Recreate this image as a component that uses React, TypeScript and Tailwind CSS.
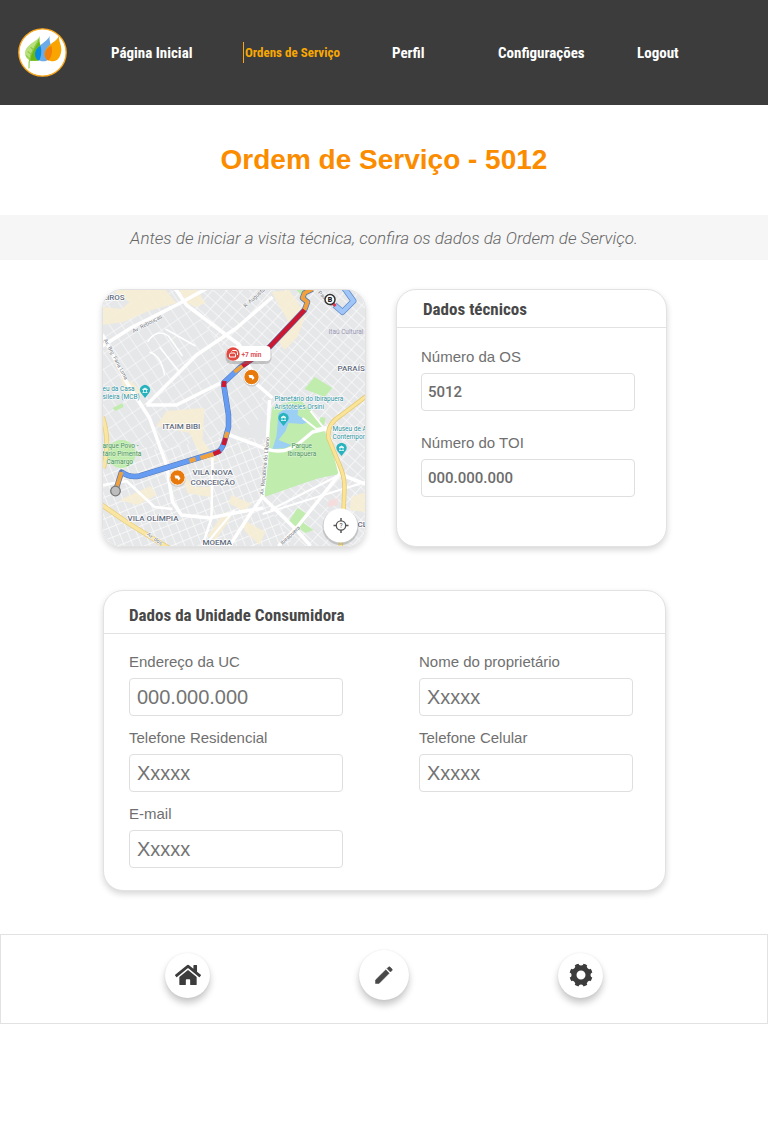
import React from "react";
import { FaHome } from "react-icons/fa";

const navItems = [
  { label: "Página Inicial", active: false },
  { label: "Ordens de Serviço", active: true },
  { label: "Perfil", active: false },
  { label: "Configurações", active: false },
  { label: "Logout", active: false },
];

function Logo() {
  return (
    <svg viewBox="24 26 147 147" className="size-[49px] shrink-0" role="img" aria-label="Logo">
      <circle cx="97.500" cy="99.500" r="71" fill="#fff" stroke="#f9a61c" strokeWidth="4" />
      <path d="M89 50C84 66 47 74 45 101C45 113 53 122 64 125L82 124C94 108 96 90 91 78C88 70 87 60 89 50Z" fill="#b9e07f" />
      <path d="M89 50C84 72 62 90 60 124L84 124C95 112 98 92 92 80C88 70 87 60 89 50Z" fill="#6cb812" />
      <path d="M57 147C55 120 64 98 86 64M58 118L48 108M64 105L53 96M71 91L62 84" fill="none" stroke="#8dca45" strokeWidth="3.500" />
      <path d="M119 49C113 68 77 77 75 104C75 118 87 126 100 126C116 126 126 110 126 94C126 78 116 68 119 49Z" fill="#6cabe8" />
      <path d="M91 79C80 85 75 94 75 104C75 116 81 122 87 124C94 112 96 92 91 79Z" fill="#078bdc" />
      <path d="M147 48C143 68 106 76 104 104C104 118 116 126 129 126C145 126 153 108 154 92C154 75 145 66 147 48Z" fill="#faa400" />
      <path d="M124 80C111 86 104 93 104 105C104 115 109 121 115 124C125 113 129 94 124 80Z" fill="#f17f0b" />
    </svg>
  );
}

function GearIcon() {
  return (
    <svg viewBox="0 0 24 24" className="size-6" aria-hidden="true">
      <circle cx="12" cy="12" r="8" fill="none" stroke="#3c3c3c" strokeWidth="7" />
      {[0, 45, 90, 135, 180, 225, 270, 315].map((a) => (
        <circle key={a} cx="12" cy="0" r="2.500" fill="#fff" transform={`rotate(${a} 12 12)`} />
      ))}
    </svg>
  );
}

function PencilIcon() {
  return (
    <svg viewBox="0 0 18 18" className="size-[18px]" aria-hidden="true">
      <path d="M0.500 17.500V14L10.800 3.800L14.200 7.200L4 17.500ZM12 2.600L13.600 1Q14.300 0.400 15 1L17 3Q17.600 3.700 17 4.400L15.400 6Z" fill="#484848" stroke="#484848" strokeWidth="0.500" />
    </svg>
  );
}

function Pin({ x, y }: { x: number; y: number }) {
  return (
    <g transform={`translate(${x} ${y})`}>
      <path d="M0 7L-4 2A5 5 0 1 1 4 2Z" fill="#26b3bd" />
      <path d="M-2.500 -1.500L0 -3L2.500 -1.500ZM-2.500 1.500H2.500M-1.500 -1V1.500M1.500 -1V1.500" fill="#fff" stroke="#fff" strokeWidth="0.700" />
    </g>
  );
}

function Roadwork({ x, y }: { x: number; y: number }) {
  return (
    <g transform={`translate(${x} ${y})`}>
      <circle cy="1" r="8.500" fill="#b5b5b5" opacity="0.600" />
      <circle r="7.700" fill="#e8790d" stroke="#fff" />
      <path d="M-3 -2L1 -2L3 1L1 3L0 1L-2 1Z" fill="#fff" />
    </g>
  );
}

function RouteMap() {
  return (
    <svg
      viewBox="103 290 263 256"
      preserveAspectRatio="xMidYMid slice"
      className="block h-full w-full font-['Roboto',sans-serif]"
      role="img"
      aria-label="Mapa do trajeto"
    >
      <defs>
        <pattern id="gridEast" width="11" height="8" patternUnits="userSpaceOnUse" patternTransform="rotate(42)">
          <path d="M0 0H11M0 0V8" stroke="#f9f9fa" strokeWidth="1.600" />
        </pattern>
        <pattern id="gridWest" width="13" height="10" patternUnits="userSpaceOnUse" patternTransform="rotate(56)">
          <path d="M0 0H13M0 0V10" stroke="#f8f8f9" strokeWidth="1.500" />
        </pattern>
        <pattern id="gridSouth" width="10" height="8" patternUnits="userSpaceOnUse" patternTransform="rotate(68)">
          <path d="M0 0H10M0 0V8" stroke="#fafafa" strokeWidth="1.700" />
        </pattern>
      </defs>
      <rect x="103" y="290" width="263" height="256" fill="#e6e7e9" />
      <path d="M177 290H366V546H295L263 497L268 415L258 385L187 305Z" fill="url(#gridEast)" />
      <path d="M103 290H177L187 305L258 385L268 415L230 435L160 450L103 440Z" fill="url(#gridWest)" />
      <path d="M103 440L160 450L230 435L268 440L263 497L295 546H103Z" fill="url(#gridSouth)" />

      <g fill="#f7eed2" opacity="0.850">
        <path d="M112 290L166 290L177 303L149 311L124 322L103 325V307L122 309L130 302Z" />
        <path d="M180 290H198L206 303L196 307L187 303Z" />
        <path d="M272 292L290 290L306 315L298 337L285 350L276 337L289 322Z" />
        <path d="M121 378L132 382L143 392L138 401L126 395Z" />
        <path d="M167 411L205 408L203 440L218 461L203 459L190 433L157 426Z" />
        <path d="M120 500L151 486L157 495L138 505ZM181 472L195 487L214 487L210 497L188 493Z" />
        <path d="M232 495L252 504L244 511L229 503ZM244 520L266 532L260 545L245 531ZM352 497L366 492V512L350 510Z" />
        <path d="M208 536L225 512L232 517L216 540Z" />
      </g>
      <path d="M329 501L338 498L338 505L328 507Z" fill="#f6dddd" />

      <g fill="#c0ecae">
        <path d="M273 407L300 399L314 413L330 440L340 474L320 478L299 485L265 497L268 440Z" />
        <path d="M305 389L315 377L333 388L325 397Z" />
        <path d="M289 522L298 508L309 515L304 523L314 530L306 533Z" />
        <path d="M297 290H309L306 300Z" />
        <circle cx="122" cy="454" r="14" />
        <path d="M113 408L123 403L124 407L116 411Z" />
        <path d="M321 417L326 418L325 424L319 428Z" />
      </g>
      <path d="M279 413L287 408H299L298 415L309 422L303 424L289 423L286 431L279 440L292 445L286 448L273 449L277 436Z" fill="#9bcff4" />

      <g fill="none" stroke="#fff" strokeWidth="3.500" strokeLinejoin="round">
        <path d="M103 346L133 327L177 305L210 287" />
        <path d="M174 286L187 305L240 345L258 385L273 398" />
        <path d="M103 335L127 382L150 418L167 465L173 502L182 515L210 518L240 512L264 508" />
        <path d="M147 405H177L223 382" />
        <path d="M147 405L197 355L237 328L273 297" />
        <path d="M230 435L257 445Q282 458 300 443L313 432L330 428" />
        <path d="M311 411L330 435L340 474M303 418L317 429L327 427" strokeWidth="2" />
        <path d="M270 400L267 458L263 497L297 530L311 546" />
        <path d="M263 497L250 515L230 546M340 474L297 528L279 546M340 474L366 484" />
        <path d="M103 485L127 481L155 507L173 509M213 458L212 518L203 546" strokeWidth="2.500" />
        <path d="M235 510L205 546M263 514L366 482M271 510L340 475" strokeWidth="2" />
        <path d="M148 342Q157 328 169 336L183 356M150 352Q162 356 165 375M160 347L180 372M166 329L196 346" strokeWidth="1.500" />
      </g>
      <g fill="none" strokeLinejoin="round">
        <path d="M367 396L342 415Q327 424 329 438L340 465Q345 476 345 487L344 512L341 548" stroke="#e4c96f" strokeWidth="4.500" />
        <path d="M367 396L342 415Q327 424 329 438L340 465Q345 476 345 487L344 512L341 548" stroke="#fae49a" strokeWidth="3" />
        <path d="M103 417Q111 441 104 468M101 504L127 522L143 532L169 548" stroke="#e6cc78" strokeWidth="5" />
        <path d="M103 417Q111 441 104 468M101 504L127 522L143 532L169 548" stroke="#fae6a4" strokeWidth="3.500" />
      </g>

      <g fill="#737780" stroke="#fff" strokeWidth="1" paintOrder="stroke" fontSize="5.500">
        <text transform="translate(134 333) rotate(-28)">Av. Rebouças</text>
        <text transform="translate(104 340) rotate(62)">Av. Brg. Faria Lima</text>
        <text transform="translate(246 308) rotate(-42)">R. Augusta</text>
        <text transform="translate(264 495) rotate(-84)">Av. República do Líbano</text>
        <text transform="translate(147 535) rotate(35)">Av. dos</text>
        <text transform="translate(283 545) rotate(-43)">Ibirapuera</text>
        <text transform="translate(318 293) rotate(45)">Paulista</text>
      </g>

      <g fill="none" strokeLinejoin="round">
        <path d="M116 491L122 472Q130 478 140 476L218 452Q223 450 226 438L229 427V415L224 383L241 367L270 347L305 310L308 302L303 298L305 293L313 289" stroke="#5578b5" strokeWidth="5.500" />
        <path d="M122 472Q130 478 140 476L218 452Q223 450 226 438L229 427V415L224 383L241 367" stroke="#669cf1" strokeWidth="4.500" />
        <path d="M116 491L122 472M190 461L196 459M201 458L214 454M226 438L228 432M235 372L243 366M305 310L308 302L303 298L305 293L313 289" stroke="#f1a13c" strokeWidth="4" />
        <path d="M214 454L221 451M224 445L226 438M224 387L225 381M243 366L270 347L305 310" stroke="#cc1830" strokeWidth="4.500" />
        <path d="M335 305L343 312L354 301L344 287" stroke="#638bc8" strokeWidth="6" />
        <path d="M335 305L343 312L354 301L344 287" stroke="#a0c5f7" strokeWidth="4.500" />
        <path d="M333 303L336 306" stroke="#dd3548" strokeWidth="3" />
      </g>
      <circle cx="116" cy="491" r="4.800" fill="#bdbdbd" stroke="#777" strokeWidth="1.300" />
      <circle cx="330.500" cy="299.500" r="5" fill="#fff" stroke="#333" strokeWidth="1.500" />
      <text x="330.500" y="302" textAnchor="middle" fontSize="7" fontWeight="900" fill="#222">B</text>

      <g fill="#626b7d" stroke="#fff" strokeWidth="1.500" paintOrder="stroke" fontSize="8" fontWeight="500">
        <text x="103" y="300">EIROS</text>
        <text x="163" y="429">ITAIM BIBI</text>
        <text x="193" y="475">VILA NOVA</text>
        <text x="191" y="485">CONCEIÇÃO</text>
        <text x="128" y="521">VILA OLÍMPIA</text>
        <text x="203" y="545">MOEMA</text>
        <text x="338" y="371">PARAÍS</text>
        <text x="358" y="527">CL</text>
      </g>
      <g fill="#278f9c" stroke="#fff" strokeWidth="1" paintOrder="stroke" fontSize="6.500">
        <text x="103" y="391">eu da Casa</text>
        <text x="103" y="399">sileira (MCB)</text>
        <text x="275" y="401">Planetário do Ibirapuera</text>
        <text x="275" y="409">Aristóteles Orsini</text>
        <text x="333" y="431">Museu de A</text>
        <text x="333" y="439">Contempor</text>
      </g>
      <g fill="#48905a" stroke="#e2f5da" strokeWidth="0.800" paintOrder="stroke" fontSize="6.500">
        <text x="292" y="448">Parque</text>
        <text x="288" y="456">Ibirapuera</text>
        <text x="103" y="448">arque Povo -</text>
        <text x="103" y="456">tário Pimenta</text>
        <text x="107" y="464">Camargo</text>
      </g>
      <text x="329" y="334" fontSize="6.500" fill="#9b97b6">Itaú Cultural</text>
      <Pin x={145.5} y={391} />
      <Pin x={284} y={419} />
      <Pin x={342} y={449} />
      <Roadwork x={252} y={377} />
      <Roadwork x={178} y={477.5} />

      <rect x="226" y="347" width="46" height="17" rx="6" fill="#777" opacity="0.350" />
      <path d="M234 346H267Q271 346 271 350V357Q271 361 267 361H234A7.500 7.500 0 0 1 234 346Z" fill="#fff" />
      <circle cx="233.500" cy="354" r="6.700" fill="#e24940" />
      <path d="M230 357V354.500L231 353H235L236 354.500V357ZM232 351.500L233 350.500H237L238 352.500V355" fill="none" stroke="#fff" strokeWidth="1" />
      <text x="242" y="357" fontSize="6.500" fontWeight="700" fill="#d95058">+7 min</text>

      <circle cx="341" cy="527" r="18" fill="#555" opacity="0.250" />
      <circle cx="341" cy="525.500" r="17" fill="#fff" />
      <circle cx="341.500" cy="525.500" r="4.700" fill="none" stroke="#555" strokeWidth="1.300" />
      <path d="M341.500 518V521M341.500 530V533M334 525.500H337M346 525.500H349" stroke="#555" strokeWidth="1.500" />
      <text x="341.500" y="528" textAnchor="middle" fontSize="6.500" fill="#444">?</text>
    </svg>
  );
}

function Field({ id, label, value, large = false }: { id: string; label: string; value: string; large?: boolean }) {
  return (
    <div className="flex w-full max-w-[214px] flex-col gap-1.5">
      <label htmlFor={id} className="text-[15px] leading-5 text-[#707070]">
        {label}
      </label>
      <input
        id={id}
        type="text"
        defaultValue={value}
        className={`h-[38px] w-full rounded-[4px] border border-[#dfdfdf] bg-white outline-none ${
          large ? "px-[7px] text-xl text-[#747474]" : "px-1.5 font-['Roboto',sans-serif] text-[15px] font-medium text-[#6c6c6c]"
        }`}
      />
    </div>
  );
}

const cardClass = "rounded-[20px] border border-[#e2e2e2] bg-white shadow-[0_3px_6px_rgba(0,0,0,0.16)]";
const headingClass = "font-['Roboto_Condensed','Roboto',sans-serif] text-[17px] font-bold leading-6 text-[#484848]";
const roundButton = "flex shrink-0 items-center justify-center rounded-full bg-white text-[#3c3c3c] shadow-[0_5px_7px_rgba(0,0,0,0.22),0_0_2px_rgba(0,0,0,0.08)]";

export default function App() {
  return (
    <div className="min-h-screen bg-white font-['Liberation_Sans',Arial,sans-serif]">
      <header className="flex h-[105px] items-center bg-[#3c3c3c] pl-[18px]">
        <Logo />
        <nav className="ml-11 grid flex-1 grid-cols-[132fr_149fr_106fr_139fr_131fr] items-center font-['Roboto_Condensed','Roboto',sans-serif] font-bold text-white">
          {navItems.map((item) => (
            <a
              key={item.label}
              href="#"
              aria-current={item.active ? "page" : undefined}
              className={
                item.active
                  ? "justify-self-start border-l border-[#f9a61c] pl-px text-[13px] leading-[21px] whitespace-nowrap text-[#f9a800]"
                  : "justify-self-start text-[15px] leading-5 whitespace-nowrap"
              }
            >
              {item.label}
            </a>
          ))}
        </nav>
      </header>

      <main>
        <h1 className="py-9 text-center text-[28px] leading-[38px] font-bold text-[#fb8c00]">Ordem de Serviço - 5012</h1>
        <p className="bg-[#f6f6f6] pt-[11px] pb-[9px] text-center font-['Roboto',sans-serif] text-[17px] leading-[25px] font-light text-[#666666] italic">
          Antes de iniciar a visita técnica, confira os dados da Ordem de Serviço.
        </p>

        <div className="mx-auto mt-[29px] flex w-full max-w-[566px] flex-col gap-[43px]">
          <div className="grid grid-cols-[264fr_271fr] gap-[30px] pl-px">
            <div className="h-[258px] overflow-hidden rounded-[20px] border border-[#e2e2e2] shadow-[0_3px_6px_rgba(0,0,0,0.16)]">
              <RouteMap />
            </div>
            <section className={cardClass}>
              <h2 className={`${headingClass} border-b border-[#e2e2e2] px-[26px] pt-[7px] pb-1.5`}>Dados técnicos</h2>
              <div className="flex flex-col gap-[22px] px-6 pt-[19px]">
                <Field id="os" label="Número da OS" value="5012" />
                <Field id="toi" label="Número do TOI" value="000.000.000" />
              </div>
            </section>
          </div>

          <section className={`${cardClass} mr-px ml-0.5`}>
            <h2 className={`${headingClass} border-b border-[#e2e2e2] px-[25px] pt-3 pb-1.5`}>Dados da Unidade Consumidora</h2>
            <div className="grid grid-cols-2 gap-x-[69px] gap-y-3 px-[25px] pt-[18px] pb-[22px]">
              <Field id="endereco" label="Endereço da UC" value="000.000.000" large />
              <Field id="nome" label="Nome do proprietário" value="Xxxxx" large />
              <Field id="residencial" label="Telefone Residencial" value="Xxxxx" large />
              <Field id="celular" label="Telefone Celular" value="Xxxxx" large />
              <Field id="email" label="E-mail" value="Xxxxx" large />
            </div>
          </section>
        </div>
      </main>

      <footer className="mt-[43px] h-[90px] border border-[#e2e2e2]">
        <div className="mx-auto flex h-full max-w-[438px] items-center justify-between pb-2">
          <button type="button" aria-label="Início" className={`${roundButton} size-[45px]`}>
            <FaHome size={26} />
          </button>
          <button type="button" aria-label="Editar" className={`${roundButton} size-[50px]`}>
            <PencilIcon />
          </button>
          <button type="button" aria-label="Configurações" className={`${roundButton} size-[45px]`}>
            <GearIcon />
          </button>
        </div>
      </footer>
    </div>
  );
}
